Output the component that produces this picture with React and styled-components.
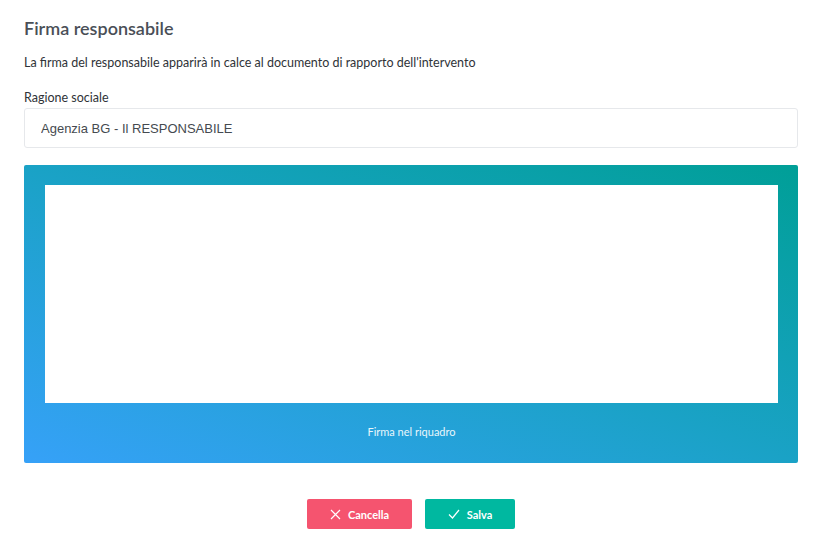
import React, { useState } from 'react';
import styled, { createGlobalStyle } from 'styled-components';

const GlobalStyle = createGlobalStyle`
  body {
    margin: 0;
    background: #fff;
    font-family: Lato, "Open Sans", sans-serif;
    color: #3d4249;
  }
`;

const Page = styled.div`
  padding: 14px 21px 0 24px;
  display: flex;
  flex-direction: column;
`;

const Title = styled.h2`
  margin: 0;
  font-size: 18px;
  font-weight: 600;
  color: #4a4f57;
  line-height: 28px;
`;

const Description = styled.p`
  margin: 12px 0 0;
  font-size: 12.5px;
  line-height: 18px;
  color: #2f3338;
`;

const Label = styled.label`
  margin-top: 18px;
  font-size: 12.5px;
  line-height: 16px;
  color: #2f3338;
`;

const Input = styled.input`
  margin-top: 2px;
  height: 40px;
  box-sizing: border-box;
  border: 1px solid #e6e8eb;
  border-radius: 3px;
  padding: 0 16px;
  font-family: "Liberation Sans", Arial, sans-serif;
  font-size: 13px;
  color: #454a50;
  outline: none;
`;

const SignaturePanel = styled.div`
  margin-top: 17px;
  height: 298px;
  box-sizing: border-box;
  border-radius: 2px;
  padding: 20px 20px 0 21px;
  background: linear-gradient(to top right, #36a1f8 0%, #1aa2c6 50%, #009f97 100%);
  display: flex;
  flex-direction: column;
`;

const Canvas = styled.div`
  height: 218px;
  background: #fff;
`;

const Hint = styled.div`
  margin-top: 22px;
  text-align: center;
  font-size: 11px;
  color: #e8f6fb;
`;

const Actions = styled.div`
  margin-top: 36px;
  display: flex;
  justify-content: center;
  gap: 13px;
`;

const Button = styled.button`
  height: 30px;
  width: ${({ width }) => width}px;
  border: none;
  border-radius: 2px;
  background: ${({ variant }) => (variant === 'danger' ? '#f5546f' : '#00b8a0')};
  color: #fff;
  font-family: Lato, sans-serif;
  font-size: 11px;
  font-weight: 700;
  display: flex;
  align-items: center;
  justify-content: center;
  gap: 7px;
  cursor: pointer;
`;

const CloseIcon = () => (
  <svg width="11" height="11" viewBox="0 0 11 11" fill="none" stroke="#fff" strokeWidth="1.2">
    <path d="M1 1l9 9M10 1l-9 9" />
  </svg>
);

const CheckIcon = () => (
  <svg width="12" height="10" viewBox="0 0 12 10" fill="none" stroke="#fff" strokeWidth="1.2">
    <path d="M1 5.5l3.5 3.5L11 1" />
  </svg>
);

export default function App() {
  const [name, setName] = useState('Agenzia BG - Il RESPONSABILE');

  return (
    <Page>
      <GlobalStyle />
      <Title>Firma responsabile</Title>
      <Description>
        La firma del responsabile apparirà in calce al documento di rapporto dell'intervento
      </Description>
      <Label>Ragione sociale</Label>
      <Input value={name} onChange={(e) => setName(e.target.value)} />
      <SignaturePanel>
        <Canvas />
        <Hint>Firma nel riquadro</Hint>
      </SignaturePanel>
      <Actions>
        <Button variant="danger" width={105}>
          <CloseIcon />
          Cancella
        </Button>
        <Button width={90}>
          <CheckIcon />
          Salva
        </Button>
      </Actions>
    </Page>
  );
}
